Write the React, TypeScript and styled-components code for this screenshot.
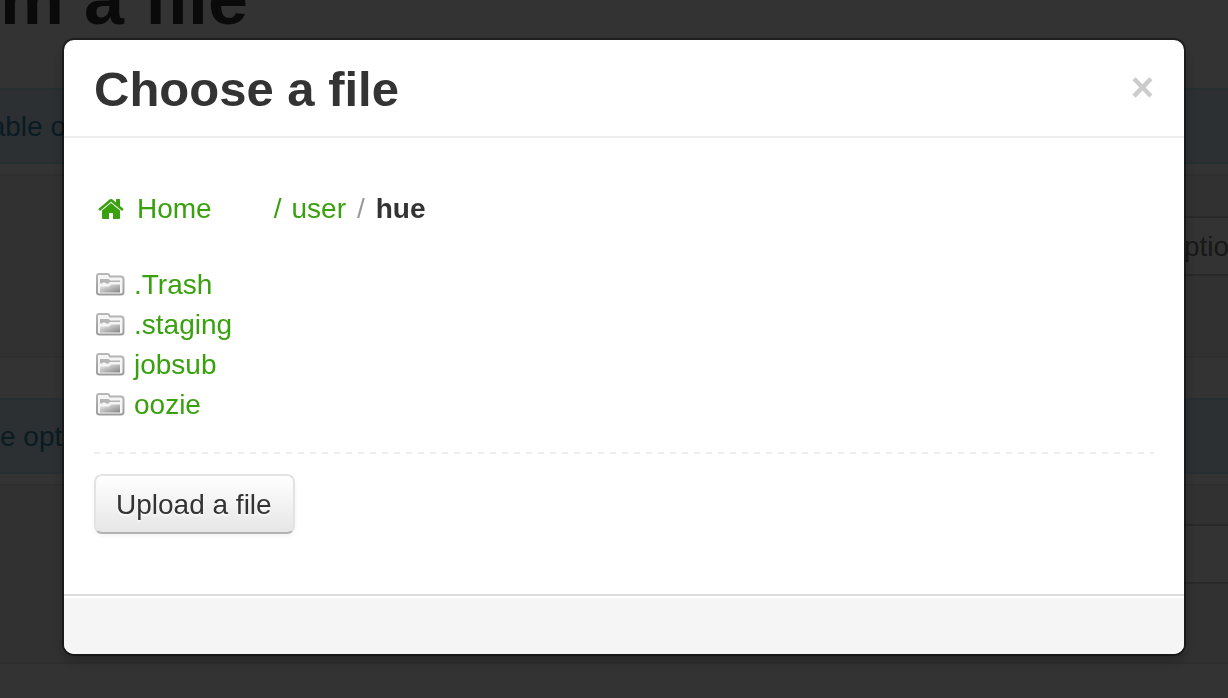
import React from "react";
import styled, { createGlobalStyle } from "styled-components";

const Global = createGlobalStyle`
  * { box-sizing: border-box; }
  html, body { margin: 0; background: #fff; }
  body {
    overflow: hidden;
    font-family: "Liberation Sans", Arial, Helvetica, sans-serif;
    font-size: 28px;
    line-height: 40px;
    color: #333;
  }
`;

const Page = styled.div`
  height: 100vh;
  overflow: hidden;
`;

const PageTitle = styled.h1`
  display: flex;
  align-items: flex-start;
  justify-content: flex-end;
  width: 248px;
  height: 88px;
  margin: 0;
  overflow: hidden;
  font-size: 72px;
  line-height: 80px;
  white-space: nowrap;
`;

const TitleText = styled.span`
  margin-top: -41px;
`;

const Notice = styled.div`
  display: flex;
  align-items: center;
  height: 76px;
  margin-bottom: 10px;
  padding-top: 2px;
  border: solid #bce8f1;
  border-width: 2px 0;
  background: #d9edf7;
  color: #3a87ad;
`;

const NoticeText = styled.span<{ $end?: boolean }>`
  display: flex;
  justify-content: ${(p) => (p.$end ? "flex-end" : "flex-start")};
  width: 66px;
  white-space: nowrap;
`;

const Well = styled.div<{ $short?: boolean }>`
  display: flex;
  justify-content: flex-end;
  height: ${(p) => (p.$short ? 180 : 184)}px;
  margin-bottom: 40px;
  padding-top: ${(p) => (p.$short ? 38 : 40)}px;
  border: solid #e3e3e3;
  border-width: 2px 0;
  background: #f5f5f5;
`;

const WellInput = styled.input`
  width: 64px;
  height: 60px;
  padding: 2px 0 0 20px;
  border: solid #ccc;
  border-width: 2px 0;
  background: #fff;
  color: #777;
  font: inherit;
`;

const Backdrop = styled.div`
  position: fixed;
  inset: 0;
  padding: 40px 44px 44px 64px;
  background: rgba(0, 0, 0, 0.8);
`;

const Dialog = styled.section`
  border-radius: 10px;
  background: #fff;
  box-shadow: 0 0 0 2px rgba(0, 0, 0, 0.4), 0 6px 14px rgba(0, 0, 0, 0.3);
`;

const DialogHeader = styled.header`
  display: flex;
  align-items: center;
  justify-content: space-between;
  padding: 18px 30px;
  border-bottom: 2px solid #eee;
`;

const DialogTitle = styled.h2`
  margin: 0;
  padding-top: 2px;
  font-size: 49px;
  line-height: 58px;
`;

const CloseButton = styled.button`
  padding: 0 0 2px;
  border: 0;
  background: none;
  color: #ccc;
  font: bold 40px/40px "Liberation Sans", Arial, sans-serif;
  cursor: pointer;
`;

const DialogBody = styled.div`
  padding: 51px 30px 60px;
`;

const Breadcrumb = styled.nav`
  display: flex;
  align-items: center;
  margin-bottom: 36px;
`;

const Link = styled.a`
  color: #39a10e;
  text-decoration: none;
`;

const HomeLink = styled(Link)`
  display: flex;
  align-items: center;
  gap: 13px;
  margin-right: 62px;
  padding-left: 4px;
`;

const PathLink = styled(Link)`
  display: flex;
  gap: 10px;
`;

const Divider = styled.span`
  padding: 0 11px;
  color: #999;
`;

const FileList = styled.ul`
  margin: 0 0 27px;
  padding: 0;
  list-style: none;
`;

const FileItem = styled.li`
  display: flex;
`;

const FileLink = styled(Link)`
  display: flex;
  align-items: center;
  gap: 8px;
`;

const Actions = styled.div`
  padding-top: 22px;
  background: repeating-linear-gradient(90deg, #eee 0 6px, transparent 6px 12px) top / 100% 2px no-repeat;
`;

const UploadButton = styled.button`
  display: block;
  height: 60px;
  padding: 2px 21px 0 20px;
  border: 2px solid;
  border-color: #e3e3e3 #e3e3e3 #b3b3b3;
  border-radius: 8px;
  background: linear-gradient(#fff, #e6e6e6);
  box-shadow: 0 2px 4px rgba(0, 0, 0, 0.05);
  color: #333;
  font: inherit;
  text-shadow: 0 2px 2px rgba(255, 255, 255, 0.75);
  cursor: pointer;
`;

const DialogFooter = styled.footer`
  height: 60px;
  border-top: 2px solid #ddd;
  border-radius: 0 0 10px 10px;
  background: #f5f5f5;
  box-shadow: inset 0 2px 0 #fff;
`;

const HomeIcon = () => (
  <svg width="26" height="28" viewBox="0 0 1664 1792" fill="currentColor" aria-hidden="true">
    <path d="M1408 992v480q0 26-19 45t-45 19h-384v-384h-256v384h-384q-26 0-45-19t-19-45v-480q0-1 .5-3t.5-3l575-474 575 474q1 2 1 6zm223-69l-62 74q-8 9-21 11h-3q-13 0-21-7l-692-577-692 577q-12 8-24 7-13-2-21-11l-62-74q-8-10-7-23.5t11-21.5l719-599q32-26 76-26t76 26l244 204v-195q0-14 9-23t23-9h192q14 0 23 9t9 23v408l219 182q10 8 11 21.5t-7 23.5z" />
  </svg>
);

const FolderIcon = () => (
  <svg width="32" height="28" viewBox="0 0 32 28" aria-hidden="true">
    <defs>
      <linearGradient id="folderEdge" x1="0" y1="0" x2="0" y2="1">
        <stop offset="0" stopColor="#b8b8b8" />
        <stop offset="1" stopColor="#9c9c9c" />
      </linearGradient>
      <linearGradient id="folderFace" x1="0" y1="0" x2="1" y2="1">
        <stop offset="0" stopColor="#eee" />
        <stop offset="1" stopColor="#858585" />
      </linearGradient>
    </defs>
    <path
      d="M3 5Q3 3 5 3H13.500Q15 3 15.500 4.500L16 5.500H27Q29.500 5.500 29.500 8V21Q29.500 23.500 27 23.500H5.500Q3 23.500 3 21Z"
      fill="#f5f5f5"
      stroke="url(#folderEdge)"
      strokeWidth="2"
    />
    <path d="M6 8H14.500L16.500 9.500H26V11H16L14.500 12.500H12L11 11.500H9L8 12.500H6Z" fill="#b4b4b4" />
    <path d="M6 15.500H15L17 13.500H26V21.500H6Z" fill="url(#folderFace)" />
  </svg>
);

const folders = [".Trash", ".staging", "jobsub", "oozie"];

export default function App() {
  return (
    <>
      <Global />
      <Page aria-hidden="true">
        <PageTitle>
          <TitleText>m a file</TitleText>
        </PageTitle>
        <Notice>
          <NoticeText $end>able o</NoticeText>
        </Notice>
        <Well>
          <WellInput aria-label="Description" defaultValue="ptio" tabIndex={-1} />
        </Well>
        <Notice>
          <NoticeText>e opt</NoticeText>
        </Notice>
        <Well $short>
          <WellInput aria-label="Value" tabIndex={-1} />
        </Well>
      </Page>
      <Backdrop>
        <Dialog role="dialog" aria-modal="true" aria-labelledby="dialog-title">
          <DialogHeader>
            <DialogTitle id="dialog-title">Choose a file</DialogTitle>
            <CloseButton type="button" aria-label="Close">×</CloseButton>
          </DialogHeader>
          <DialogBody>
            <Breadcrumb aria-label="Path">
              <HomeLink href="#home">
                <HomeIcon />
                Home
              </HomeLink>
              <PathLink href="#user">
                <span>/</span>
                <span>user</span>
              </PathLink>
              <Divider>/</Divider>
              <strong>hue</strong>
            </Breadcrumb>
            <FileList>
              {folders.map((name) => (
                <FileItem key={name}>
                  <FileLink href={`#${name}`}>
                    <FolderIcon />
                    {name}
                  </FileLink>
                </FileItem>
              ))}
            </FileList>
            <Actions>
              <UploadButton type="button">Upload a file</UploadButton>
            </Actions>
          </DialogBody>
          <DialogFooter />
        </Dialog>
      </Backdrop>
    </>
  );
}
